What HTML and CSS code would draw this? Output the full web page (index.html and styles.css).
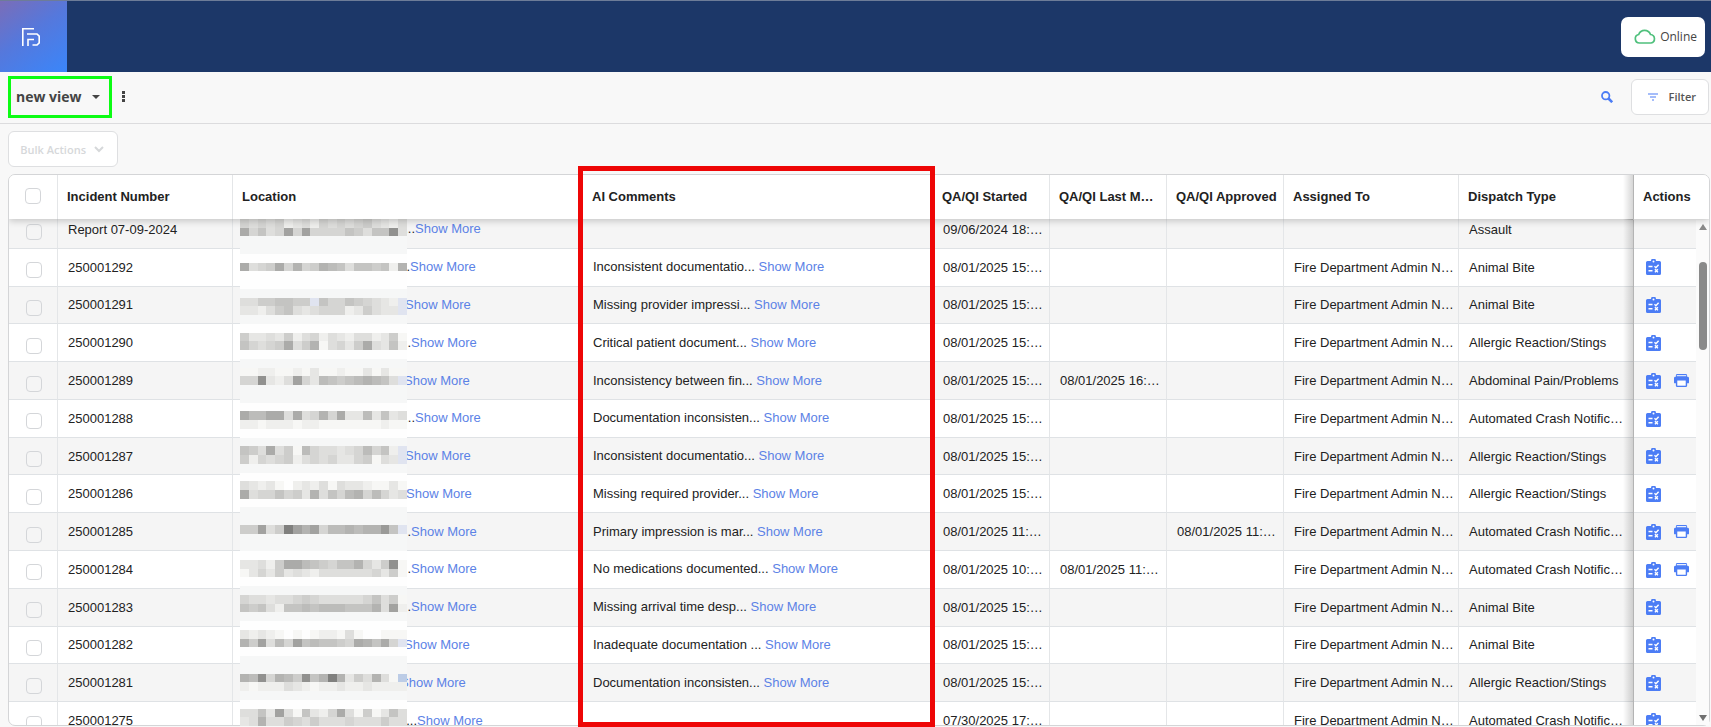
FILE: index.html
```html
<!DOCTYPE html>
<html lang="en">
<head>
    <meta charset="UTF-8">
    <meta name="viewport" content="width=device-width, initial-scale=1.0">
    <title>Incidents</title>
    <link rel="stylesheet" href="styles.css">
</head>
<body>

<!-- Icons -->
<svg class="sprite" aria-hidden="true">
    <symbol id="icon-review" viewBox="0 0 15 16">
        <path fill="#4c7df5" d="M1.500 2H5a2.500 2.500 0 0 1 5 0h3.500A1.500 1.500 0 0 1 15 3.500v11a1.500 1.500 0 0 1-1.500 1.500h-12A1.500 1.500 0 0 1 0 14.500v-11A1.500 1.500 0 0 1 1.500 2z"/>
        <circle cx="7.500" cy="2.600" r="1" fill="#fff"/>
        <path d="M2.500 7.500h4M2.500 11.800h4M8.500 7.300l1.400 1.400 2.700-3M8.900 10.300l3 3M11.900 10.300l-3 3" fill="none" stroke="#fff" stroke-width="1.400"/>
    </symbol>
    <symbol id="icon-print" viewBox="0 0 16 15">
        <path fill="#4c7df5" d="M3.500 0h9A1.500 1.500 0 0 1 14 1.500V3h.5A1.500 1.500 0 0 1 16 4.500V9a1 1 0 0 1-1 1h-1v2.500a1.500 1.500 0 0 1-1.500 1.500h-9A1.500 1.500 0 0 1 2 12.500V10H1a1 1 0 0 1-1-1V4.500A1.500 1.500 0 0 1 1.500 3H2V1.500A1.500 1.500 0 0 1 3.500 0z"/>
        <path fill="#e8effe" d="M3 1.200h10V2.400H3z"/>
        <path fill="#fff" d="M3.500 7h9v5.500h-9z"/>
    </symbol>
</svg>

<header class="topbar">
    <a class="logo" href="#" aria-label="Home">
        <svg width="20" height="20" viewBox="0 0 20 20" fill="none" stroke="#fff" stroke-width="1.600">
            <path d="M1.800 19V1.800H13"/>
            <path d="M6 7h10l2.200 2.200v6.600L16 18h-4.500"/>
            <path d="M7 19v-6.500h6"/>
        </svg>
    </a>
    <button class="online" type="button">
        <svg width="22" height="15" viewBox="0 0 22 15" fill="none" stroke="#4fc07c" stroke-width="1.700">
            <path d="M5.500 14a4.300 4.300 0 0 1-.8-8.500A6.300 6.300 0 0 1 16.500 5.500 4.300 4.300 0 0 1 17 14z"/>
        </svg>
        Online
    </button>
</header>

<div class="viewbar">
    <button class="view-name" type="button">new view <span class="caret"></span></button>
    <button class="more" type="button" aria-label="View options"><i></i><i></i><i></i></button>
    <button class="search" type="button" aria-label="Search">
        <svg width="12" height="12" viewBox="0 0 12 12" fill="none" stroke="#4c7df5">
            <circle cx="4.700" cy="4.700" r="3.700" stroke-width="1.800"/>
            <path d="M7.500 7.500l3.700 3.700" stroke-width="2.600"/>
        </svg>
    </button>
    <button class="filter" type="button">
        <svg width="10" height="8" viewBox="0 0 10 8" stroke="#4c7df5" stroke-width="1.100">
            <path d="M0 1h10M2 4h6M4 7h2"/>
        </svg>
        Filter
    </button>
</div>

<div class="toolbar">
    <button class="bulk" type="button" disabled>
        Bulk Actions
        <svg width="10" height="7" viewBox="0 0 10 7" fill="none" stroke="#d6d8da" stroke-width="2"><path d="M1 1l4 4 4-4"/></svg>
    </button>
</div>

<main class="card">
    <div class="scroller" id="scroller">
        <table>
            <colgroup>
                <col class="col-check"><col class="col-mid"><col><col>
                <col class="col-date"><col class="col-date"><col class="col-date">
                <col class="col-mid"><col class="col-mid"><col class="col-actions">
            </colgroup>
            <thead>
                <tr>
                    <th class="check"><input type="checkbox" aria-label="Select all"></th>
                    <th>Incident Number</th>
                    <th>Location</th>
                    <th>AI Comments</th>
                    <th>QA/QI Started</th>
                    <th>QA/QI Last M…</th>
                    <th>QA/QI Approved</th>
                    <th>Assigned To</th>
                    <th>Dispatch Type</th>
                    <th class="actions">Actions</th>
                </tr>
            </thead>
            <tbody id="rows"></tbody>
        </table>
    </div>
    <svg class="redaction" id="redaction" viewBox="0 0 19 58" preserveAspectRatio="none" shape-rendering="crispEdges" aria-hidden="true"></svg>
    <div class="scrollbar"><span class="arrow-up"></span><span class="thumb"></span><span class="arrow-down"></span></div>
    <div class="highlight"></div>
</main>

<script>
const admin = "Fire Department Admin N…";

// number, width of the hidden address, comment, started, modified, approved, assigned, type, printable
const incidents = [
    ["Report 07-09-2024", 172, "", "09/06/2024 18:…", "", "", "", "Assault"],
    ["250001292", 167, "Inconsistent documentatio", "08/01/2025 15:…", "", "", admin, "Animal Bite"],
    ["250001291", 162, "Missing provider impressi", "08/01/2025 15:…", "", "", admin, "Animal Bite"],
    ["250001290", 168, "Critical patient document", "08/01/2025 15:…", "", "", admin, "Allergic Reaction/Stings"],
    ["250001289", 161, "Inconsistency between fin", "08/01/2025 15:…", "08/01/2025 16:…", "", admin, "Abdominal Pain/Problems", true],
    ["250001288", 172, "Documentation inconsisten", "08/01/2025 15:…", "", "", admin, "Automated Crash Notific…"],
    ["250001287", 162, "Inconsistent documentatio", "08/01/2025 15:…", "", "", admin, "Allergic Reaction/Stings"],
    ["250001286", 163, "Missing required provider", "08/01/2025 15:…", "", "", admin, "Allergic Reaction/Stings"],
    ["250001285", 168, "Primary impression is mar", "08/01/2025 11:…", "", "08/01/2025 11:…", admin, "Automated Crash Notific…", true],
    ["250001284", 168, "No medications documented", "08/01/2025 10:…", "08/01/2025 11:…", "", admin, "Automated Crash Notific…", true],
    ["250001283", 168, "Missing arrival time desp", "08/01/2025 15:…", "", "", admin, "Animal Bite"],
    ["250001282", 161, "Inadequate documentation ", "08/01/2025 15:…", "", "", admin, "Animal Bite"],
    ["250001281", 157, "Documentation inconsisten", "08/01/2025 15:…", "", "", admin, "Allergic Reaction/Stings"],
    ["250001275", 174, "", "07/30/2025 17:…", "", "", admin, "Automated Crash Notific…"]
];

function icon(name, label) {
    return `<button type="button" class="icon" aria-label="${label}"><svg class="${name}"><use href="#icon-${name}"/></svg></button>`;
}

document.getElementById("rows").innerHTML = incidents.map((row, i) => {
    const [number, width, comment, started, modified, approved, assigned, type, printable] = row;
    const more = '<a href="#">Show More</a>';
    return `<tr>
        <td class="check"><input type="checkbox" aria-label="Select ${number}"></td>
        <td>${number}</td>
        <td class="long"><span class="address" style="width:${width}px">...</span>${more}</td>
        <td class="long">${comment ? comment + "... " + more : ""}</td>
        <td>${started}</td>
        <td>${modified}</td>
        <td>${approved}</td>
        <td>${assigned}</td>
        <td>${type}</td>
        <td class="actions">${i > 0 ? icon("review", "Review") : ""}${printable ? icon("print", "Print") : ""}</td>
    </tr>`;
}).join("");

document.getElementById("scroller").scrollTop = 8;

// Address mosaic, one character per cell: 0-f is dark to light, L and B are bluish.
// A single character fills the whole line.
const mosaic = [
    "ababadcbdababa9bcdb", "5a8ba4a4aaaa89b882b", "E", "E",
    "f", "5ba95a6a9678b8898d6", "f", "f", "E",
    "bb998899L8aa89abcdL", "ccdb98bcbaaadc9bccL", "E", "f",
    "9ccbc9dbadbcdbbdc9e", "8aba95b96ebac95bc8d", "f", "E",
    "eeddeedeceedeececee", "aa2cdb4ac78987678bL", "E", "E",
    "f", "57755b5ba6a5cc7c8cb", "ddedddeddeeeeeeedee", "f", "E",
    "89b5b9e7abbcba7a8dL", "9daba9dbabacca9ebcL", "E", "f",
    "bcdcefdcdbebccdeece", "5baa8a9c6b8a76a7acb", "f", "E", "E",
    "994b90464a77676638L", "E", "E", "f",
    "ccbd955789a886ac92e", "ecac9cbcdbbbbbbac9e", "f", "E",
    "abbcbba9abbbbba8b9e", "898bd88787778886b4d", "E", "f",
    "cdcdefefeddebeffeee", "694b7a487889a5685aL", "f", "E", "E",
    "672a67928606c9b6beB", "dedddbcdeddcddcdddd", "E", "f",
    "bb8c4be8cda5be9ec8b", "cb6bb9ab9bbbabbb9bb"
];

function shade(char) {
    if (char === "L") return "#e0e4f0";
    if (char === "B") return "#bccce6";
    if (char === "E") return "#f6f7f7";
    if (char === "f") return "#fefefe";
    const level = Math.round(128 + parseInt(char, 16) * 8.5);
    return `rgb(${level},${level},${level - 2})`;
}

document.getElementById("redaction").innerHTML = mosaic.map((line, y) =>
    line.length === 1
        ? `<rect y="${y}" width="19" height="1" fill="${shade(line)}"/>`
        : [...line].map((char, x) => `<rect x="${x}" y="${y}" width="1" height="1" fill="${shade(char)}"/>`).join("")
).join("");
</script>

</body>
</html>
```
FILE: styles.css
```css
* {
    box-sizing: border-box;
}

body {
    margin: 0;
    height: 100vh;
    display: flex;
    flex-direction: column;
    overflow: hidden;
    background-color: #f8f8f8;
    color: #222;
    font-family: "Liberation Sans", Arial, sans-serif;
    font-size: 13px;
}

button {
    font-family: "Open Sans", sans-serif;
    padding: 0;
    border: 0;
    background: none;
    cursor: pointer;
}

.sprite {
    position: absolute;
    width: 0;
    height: 0;
}

/* Top bar */
.topbar {
    display: flex;
    align-items: center;
    justify-content: space-between;
    flex: none;
    height: 72px;
    padding-right: 6px;
    border-top: 1px solid #6d7c98;
    background-color: #1c3768;
}

.logo {
    display: flex;
    align-items: center;
    width: 67px;
    height: 100%;
    padding-left: 21px;
    background: linear-gradient(145deg, #7a6db8 0%, #5578dc 45%, #3a86fa 100%);
}

.online {
    display: flex;
    align-items: center;
    justify-content: flex-end;
    gap: 4px;
    width: 84px;
    height: 40px;
    padding-right: 8px;
    border-radius: 7px;
    background-color: #fff;
    color: #444;
    font-size: 12px;
}

/* View bar */
.viewbar {
    display: flex;
    align-items: center;
    flex: none;
    height: 52px;
    padding: 0 2px 2px 8px;
    border-bottom: 1px solid #dcdcde;
}

.view-name {
    display: flex;
    align-items: center;
    gap: 10px;
    height: 42px;
    padding: 0 9px 0 5px;
    border: 3px solid #0cfc14;
    color: #444;
    font-size: 14px;
    font-weight: 700;
}

.caret {
    border: 4px solid transparent;
    border-top-color: #444;
    border-bottom: 0;
}

.more {
    display: grid;
    gap: 1px;
    margin: 0 auto 0 10px;
}

.more i {
    width: 3px;
    height: 3px;
    background-color: #444;
}

.search {
    display: flex;
    margin-right: 18px;
}

.filter,
.bulk {
    display: flex;
    align-items: center;
    justify-content: flex-end;
    height: 36px;
    border: 1px solid #dedfe1;
    border-radius: 6px;
    background-color: #fff;
    font-size: 11px;
}

.filter {
    gap: 11px;
    width: 78px;
    padding-right: 12px;
    color: #555;
    font-weight: 600;
}

.toolbar {
    flex: none;
    padding: 7px 8px;
}

.bulk {
    gap: 8px;
    width: 110px;
    padding-right: 13px;
    color: #d6d8da;
    font-weight: 600;
}

/* Incident table */
.card {
    position: relative;
    flex: 1;
    min-height: 0;
    margin: 0 1px 1px 8px;
    border: 1px solid #d4d5d7;
    border-radius: 7px;
    background-color: #fff;
}

.scroller {
    height: 100%;
    overflow: hidden;
    border-radius: 6px;
}

table {
    width: 100%;
    height: 573px;
    table-layout: fixed;
    border-collapse: separate;
    border-spacing: 0;
}

.col-check {
    width: 49px;
}

.col-mid {
    width: 175px;
}

.col-date {
    width: 117px;
}

.col-actions {
    width: 75px;
}

thead {
    position: sticky;
    top: 0;
    z-index: 2;
    height: 44px;
    box-shadow: 0 2px 7px rgba(0, 0, 0, 0.2);
}

th {
    height: 44px;
    padding: 0 0 2px 9px;
    border-right: 1px solid #e4e6e8;
    background-color: #fff;
    text-align: left;
    font-size: 13px;
    white-space: nowrap;
}

td {
    padding: 0 0 0 10px;
    border-right: 1px solid #e4e6e8;
    border-bottom: 1px solid #dfe2e5;
    white-space: nowrap;
    overflow: hidden;
}

tbody tr:nth-child(odd) {
    background-color: #f5f5f5;
}

td.long {
    padding-bottom: 1px;
}

td a {
    color: #5c82e6;
    text-decoration: none;
}

.address {
    display: inline-block;
    text-align: right;
}

th.check {
    padding-left: 16px;
}

td.check {
    padding: 6px 0 0 17px;
}

input[type="checkbox"] {
    display: block;
    appearance: none;
    width: 16px;
    height: 16px;
    margin: 0;
    border: 1px solid #d4d6d9;
    border-radius: 4px;
    background-color: transparent;
}

/* Pinned actions column */
.actions {
    position: relative;
    overflow: visible;
    border-right: 0;
}

.actions::before {
    content: "";
    position: absolute;
    top: 0;
    bottom: -1px;
    right: 100%;
    width: 10px;
    border-right: 1px solid #b4b4b4;
    background: linear-gradient(to left, rgba(0, 0, 0, 0.16), rgba(0, 0, 0, 0));
}

td.actions {
    padding-left: 12px;
}

.icon {
    display: inline-block;
    margin-right: 13px;
    vertical-align: middle;
}

.icon svg {
    display: block;
    width: 15px;
    height: 16px;
}

.redaction {
    position: absolute;
    top: 44px;
    left: 231px;
    width: 167px;
    height: 507px;
}

.scrollbar {
    position: absolute;
    top: 45px;
    right: 0;
    bottom: 0;
    width: 13px;
    display: flex;
    flex-direction: column;
    align-items: center;
    padding: 4px 0;
    background-color: #fbfbfb;
}

.arrow-up {
    border: 4px solid transparent;
    border-top: 0;
    border-bottom: 6px solid #8a8a8a;
}

.thumb {
    width: 8px;
    height: 88px;
    margin: 32px 0 auto;
    border-radius: 4px;
    background-color: #8a8a8a;
}

.arrow-down {
    border: 4px solid transparent;
    border-bottom: 0;
    border-top: 6px solid #707070;
}

/* Box drawn round the AI comments column */
.highlight {
    position: absolute;
    z-index: 3;
    top: -9px;
    bottom: -2px;
    left: calc(50% - 281px);
    width: calc(50% - 493px);
    border: 5px solid #ee0606;
    pointer-events: none;
}
```
